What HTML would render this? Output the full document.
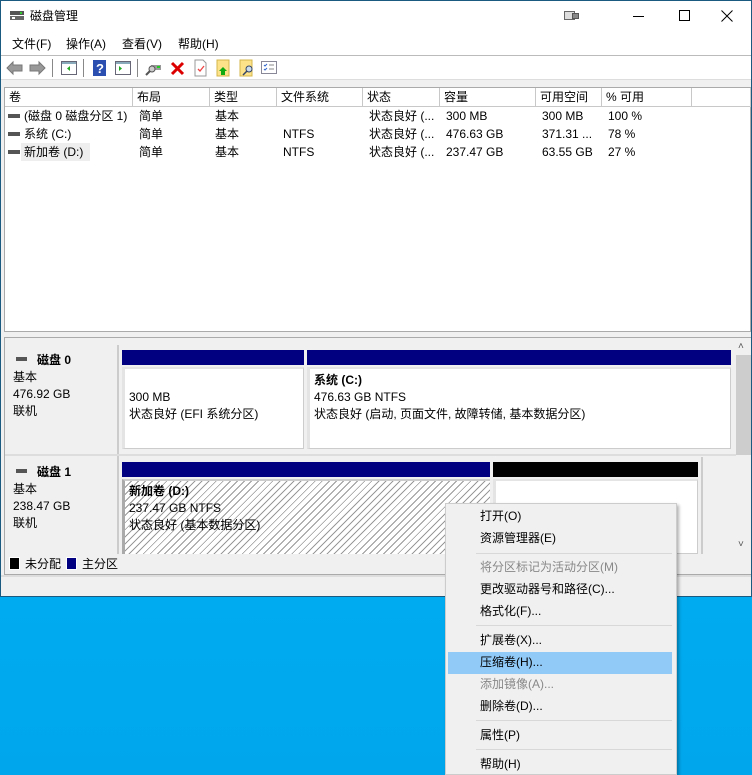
<!DOCTYPE html>
<html><head><meta charset="utf-8"><style>
*{margin:0;padding:0;box-sizing:border-box}
body{width:752px;height:775px;overflow:hidden;position:relative;background:linear-gradient(180deg,#00a8ea 0%,#00b4f5 40%,#00a6ec 100%);font-family:"Liberation Sans","Noto Sans CJK SC",sans-serif;font-size:12px;line-height:16px;color:#000}
.a{position:absolute;white-space:nowrap}
.win{position:absolute;left:0;top:0;width:752px;height:597px;background:#f0f0f0;border:1px solid #1a5a80;border-top:1px solid #1a5a80}
.hdr{position:absolute;top:87px;height:19px;background:#fff;border-right:1px solid #c8c8c8;border-bottom:1px solid #c8c8c8;padding:1px 0 0 4px}
.navy{position:absolute;background:#000080}
.hatch{background:repeating-linear-gradient(135deg,#fff 0 4px,#999 4px 5px)}
.mi{position:absolute;left:34px}
.sep{position:absolute;left:30px;right:4px;height:1px;background:#d8d8d8}
</style></head><body>
<div class="win">
 <div class="a" style="left:0;top:0;width:750px;height:32px;background:#fff"></div>
 <svg class="a" style="left:8px;top:9px" width="16" height="12"><rect x="1" y="1" width="14" height="4" fill="#555"/><rect x="1" y="6" width="14" height="4" fill="#666"/><rect x="3" y="7" width="3" height="2" fill="#fff"/><rect x="11" y="2" width="2" height="2" fill="#3c3"/></svg>
 <div class="a" style="left:29px;top:7px;font-size:12px">磁盘管理</div>
 <svg class="a" style="left:563px;top:10px" width="16" height="10"><rect x="0.5" y="0.5" width="10" height="8" fill="#ddd" stroke="#666"/><rect x="8.5" y="2.5" width="6" height="5" fill="#888" stroke="#555"/></svg>
 <div class="a" style="left:632px;top:15px;width:11px;height:1px;background:#000"></div>
 <div class="a" style="left:678px;top:9px;width:11px;height:11px;border:1px solid #000"></div>
 <svg class="a" style="left:720px;top:9px" width="12" height="12"><path d="M0.5 0.5L11.5 11.5M11.5 0.5L0.5 11.5" stroke="#000"/></svg>
 <div class="a" style="left:0;top:32px;width:750px;height:22px;background:#fff"></div>
 <div class="a" style="left:11px;top:35px">文件(F)</div><div class="a" style="left:65px;top:35px">操作(A)</div><div class="a" style="left:121px;top:35px">查看(V)</div><div class="a" style="left:177px;top:35px">帮助(H)</div>
 <div class="a" style="left:0;top:54px;width:750px;height:1px;background:#bbb"></div>
 <div class="a" style="left:0;top:55px;width:750px;height:23px;background:#fff"></div>
 <svg class="a" style="left:0;top:56px" width="290" height="22">
  <path d="M6 11 L12 5 L12 8 L21 8 L21 14 L12 14 L12 17Z" fill="#999" stroke="#777"/>
  <path d="M44 11 L38 5 L38 8 L29 8 L29 14 L38 14 L38 17Z" fill="#999" stroke="#777"/>
  <line x1="51.5" y1="2" x2="51.5" y2="20" stroke="#888"/>
  <rect x="60.5" y="4.5" width="15" height="13" fill="#fff" stroke="#667"/><rect x="61" y="5" width="14" height="2" fill="#8ab"/><path d="M69 9 L66 11.5 L69 14Z" fill="#2a2"/>
  <line x1="82.5" y1="2" x2="82.5" y2="20" stroke="#888"/>
  <rect x="92" y="3" width="13" height="16" fill="#2a4fb0"/><text x="95" y="16" fill="#fff" font-size="13" font-weight="bold" font-family="Liberation Sans">?</text>
  <rect x="114.5" y="4.5" width="15" height="13" fill="#fff" stroke="#667"/><rect x="115" y="5" width="14" height="2" fill="#8ab"/><path d="M118 9 L121 11.5 L118 14Z" fill="#2a2"/>
  <line x1="136.5" y1="2" x2="136.5" y2="20" stroke="#888"/>
  <rect x="150" y="8" width="10" height="5" fill="#999"/><circle cx="151" cy="12" r="3" fill="#ccc" stroke="#555"/><line x1="149" y1="14" x2="145" y2="18" stroke="#555" stroke-width="2"/><rect x="156" y="9" width="3" height="2" fill="#2c2"/>
  <path d="M171 6 L182 17 M182 6 L171 17" stroke="#d00" stroke-width="3"/>
  <path d="M194 3 L202 3 L205 6 L205 19 L194 19Z" fill="#fff" stroke="#999"/><path d="M197 12 L199 14 L203 9" stroke="#e44" fill="none" stroke-width="1.3"/>
  <rect x="216" y="3" width="12" height="16" fill="#fde28a" stroke="#d4b44a"/><path d="M222 10 L226 14 L224 14 L224 18 L220 18 L220 14 L218 14Z" fill="#1a1"/>
  <rect x="239" y="3" width="12" height="16" fill="#fde28a" stroke="#d4b44a"/><circle cx="248" cy="12" r="3" fill="#cde" stroke="#346"/><line x1="246" y1="14" x2="242" y2="18" stroke="#346" stroke-width="1.5"/>
  <rect x="260.5" y="4.5" width="15" height="12" fill="#fff" stroke="#889"/><path d="M263 8 l1 1 l2-2 M263 12 l1 1 l2-2" stroke="#36c" fill="none"/><path d="M268 8h5 M268 12h5" stroke="#888"/>
 </svg>
 <div class="a" style="left:0;top:78px;width:750px;height:8px;background:#f0f0f0;border-top:1px solid #ddd"></div>
 <div class="a" style="left:3px;top:86px;width:747px;height:245px;background:#fff;border:1px solid #aaa"></div>
 <div class="hdr" style="left:4px;width:128px">卷</div>
 <div class="hdr" style="left:132px;width:77px">布局</div>
 <div class="hdr" style="left:209px;width:67px">类型</div>
 <div class="hdr" style="left:276px;width:86px">文件系统</div>
 <div class="hdr" style="left:362px;width:77px">状态</div>
 <div class="hdr" style="left:439px;width:96px">容量</div>
 <div class="hdr" style="left:535px;width:66px">可用空间</div>
 <div class="hdr" style="left:601px;width:90px">% 可用</div>
 <div class="hdr" style="left:691px;width:59px"></div>
 <div class="a" style="left:20px;top:142px;width:69px;height:18px;background:#eee"></div>
 <div class="a" style="left:7px;top:113px;width:12px;height:4px;background:#555;box-shadow:0 18px #555,0 36px #555"></div>
 <div class="a" style="left:23px;top:106px;line-height:18px">(磁盘 0 磁盘分区 1)<br>系统 (C:)<br>新加卷 (D:)</div>
 <div class="a" style="left:138px;top:106px;line-height:18px">简单<br>简单<br>简单</div>
 <div class="a" style="left:214px;top:106px;line-height:18px">基本<br>基本<br>基本</div>
 <div class="a" style="left:282px;top:106px;line-height:18px"><br>NTFS<br>NTFS</div>
 <div class="a" style="left:368px;top:106px;line-height:18px">状态良好 (...<br>状态良好 (...<br>状态良好 (...</div>
 <div class="a" style="left:445px;top:106px;line-height:18px">300 MB<br>476.63 GB<br>237.47 GB</div>
 <div class="a" style="left:541px;top:106px;line-height:18px">300 MB<br>371.31 ...<br>63.55 GB</div>
 <div class="a" style="left:607px;top:106px;line-height:18px">100 %<br>78 %<br>27 %</div>
 <div class="a" style="left:3px;top:336px;width:747px;height:238px;border:1px solid #aaa;background:#f0f0f0"></div>
 <div class="a" style="left:735px;top:337px;width:15px;height:216px;background:#f0f0f0"></div>
 <div class="a" style="left:735px;top:354px;width:15px;height:100px;background:#cdcdcd"></div>
 <div class="a" style="left:737px;top:338px;font-size:10px;color:#555">˄</div>
 <div class="a" style="left:737px;top:536px;font-size:10px;color:#555">˅</div>
 <div class="a" style="left:4px;top:344px;width:114px;height:109px;background:#f0f0f0;border-right:2px solid #ccc"></div>
 <div class="a" style="left:4px;top:455px;width:114px;height:98px;background:#f0f0f0;border-right:2px solid #ccc"></div>
 <div class="a" style="left:4px;top:453px;width:731px;height:2px;background:#ddd"></div>
 <div class="a" style="left:15px;top:356px;width:11px;height:4px;background:#555"></div>
 <div class="a" style="left:36px;top:351px;font-weight:bold">磁盘 0</div>
 <div class="a" style="left:12px;top:368px;line-height:17px">基本<br>476.92 GB<br>联机</div>
 <div class="a" style="left:15px;top:468px;width:11px;height:4px;background:#555"></div>
 <div class="a" style="left:36px;top:463px;font-weight:bold">磁盘 1</div>
 <div class="a" style="left:12px;top:480px;line-height:17px">基本<br>238.47 GB<br>联机</div>
 <div class="navy" style="left:121px;top:349px;width:182px;height:15px"></div>
 <div class="navy" style="left:306px;top:349px;width:424px;height:15px"></div>
 <div class="a" style="left:121px;top:366px;width:182px;height:82px;background:#fff;border:1px solid #ccc;border-left:3px solid #e4e4e4;border-top:2px solid #e4e4e4"></div>
 <div class="a" style="left:306px;top:366px;width:424px;height:82px;background:#fff;border:1px solid #ccc;border-left:3px solid #e4e4e4;border-top:2px solid #e4e4e4"></div>
 <div class="a" style="left:128px;top:388px;line-height:17px">300 MB<br>状态良好 (EFI 系统分区)</div>
 <div class="a" style="left:313px;top:371px;line-height:17px"><b>系统 (C:)</b><br>476.63 GB NTFS<br>状态良好 (启动, 页面文件, 故障转储, 基本数据分区)</div>
 <div class="navy" style="left:121px;top:461px;width:368px;height:15px"></div>
 <div class="a" style="left:492px;top:461px;width:205px;height:15px;background:#000"></div>
 <div class="a" style="left:700px;top:456px;width:2px;height:97px;background:#ccc"></div>
 <div class="a hatch" style="left:121px;top:478px;width:368px;height:75px;border-left:3px solid #aaa;border-top:2px solid #ccc"></div>
 <div class="a" style="left:492px;top:478px;width:205px;height:75px;background:#fff;border:1px solid #ccc;border-left:3px solid #e4e4e4;border-top:2px solid #e4e4e4"></div>
 <div class="a" style="left:128px;top:482px;line-height:17px"><b>新加卷 (D:)</b><br>237.47 GB NTFS<br>状态良好 (基本数据分区)</div>
 <div class="a" style="left:4px;top:553px;width:746px;height:20px;background:#f0f0f0"></div>
 <div class="a" style="left:8px;top:556px;width:11px;height:13px;background:#000;border:1px solid #fff"></div>
 <div class="a" style="left:24px;top:555px">未分配</div>
 <div class="a" style="left:65px;top:556px;width:11px;height:13px;background:#000080;border:1px solid #fff"></div>
 <div class="a" style="left:81px;top:555px">主分区</div>
 <div class="a" style="left:0;top:574px;width:750px;height:2px;background:#ddd"></div>
</div>
<div class="a" style="left:445px;top:503px;width:232px;height:272px;background:#f0f0f0;border:1px solid #ccc;box-shadow:2px 2px 3px rgba(0,0,0,.3)">
 <div class="mi" style="top:4px">打开(O)</div>
 <div class="mi" style="top:26px">资源管理器(E)</div>
 <div class="sep" style="top:49px"></div>
 <div class="mi" style="top:55px;color:#888">将分区标记为活动分区(M)</div>
 <div class="mi" style="top:77px">更改驱动器号和路径(C)...</div>
 <div class="mi" style="top:99px">格式化(F)...</div>
 <div class="sep" style="top:121px"></div>
 <div class="mi" style="top:128px">扩展卷(X)...</div>
 <div class="a" style="left:2px;top:148px;width:224px;height:22px;background:#91c9f7"></div>
 <div class="mi" style="top:150px">压缩卷(H)...</div>
 <div class="mi" style="top:172px;color:#888">添加镜像(A)...</div>
 <div class="mi" style="top:194px">删除卷(D)...</div>
 <div class="sep" style="top:216px"></div>
 <div class="mi" style="top:223px">属性(P)</div>
 <div class="sep" style="top:245px"></div>
 <div class="mi" style="top:252px">帮助(H)</div>
</div>
</body></html>
